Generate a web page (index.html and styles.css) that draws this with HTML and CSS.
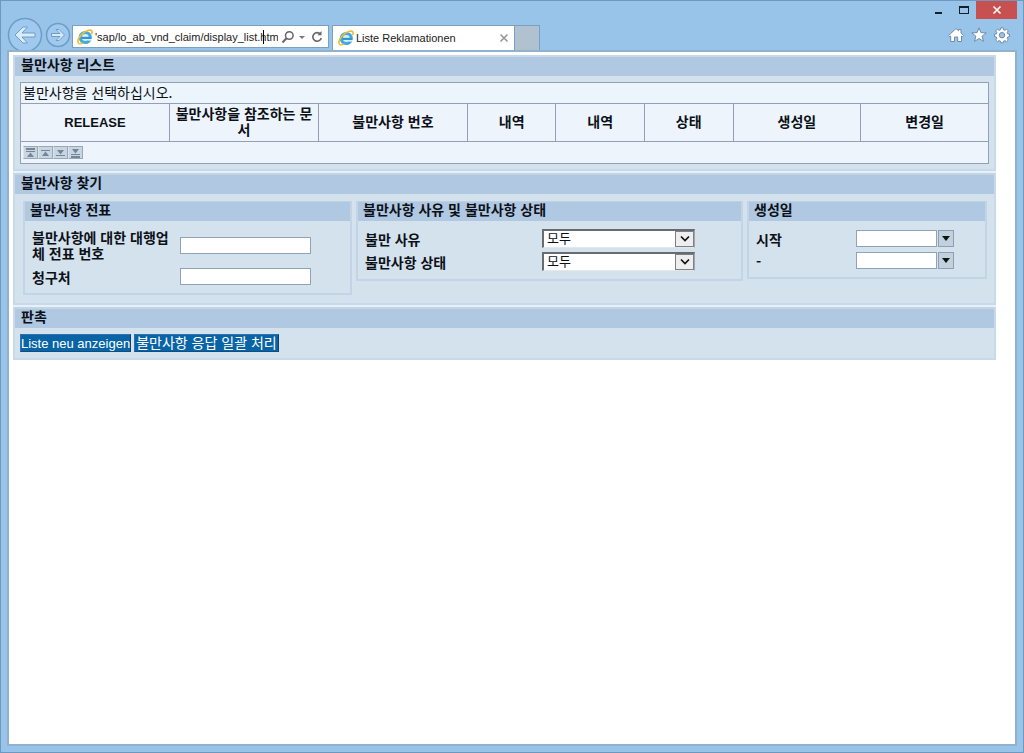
FILE: index.html
```html
<!DOCTYPE html>
<html lang="ko">
<head>
<meta charset="utf-8">
<meta name="viewport" content="width=device-width, initial-scale=1">
<title>Liste Reklamationen</title>
<link rel="stylesheet" href="styles.css">
</head>
<body>
<svg class="defs" aria-hidden="true">
  <symbol id="ie" viewBox="0 0 16 16">
    <circle cx="8.3" cy="8.5" r="5" fill="#d5effb" stroke="#41a9e0" stroke-width="3.2"/>
    <path d="M4.5 8.9h9.3" stroke="#2f93d1" stroke-width="2.1"/>
    <path d="M10.5 10.2h4.6v1.3h-4.600z" fill="#fff"/>
    <path d="M1.9 14.6C-.7 12.6 2.2 7 6.500 3.800 10 1.100 14 .3 14.900 2.100c.5 1 .1 2.200-.4 3.100" fill="none" stroke="#f0bd2c" stroke-width="1.6"/>
    <path d="M1.900 14.600c1.200.7 3 .1 4.500-.8" fill="none" stroke="#f0bd2c" stroke-width="1.300"/>
  </symbol>
</svg>
<div class="window">
  <header class="chrome">
    <div class="nav">
      <button class="round back" aria-label="Back"><svg viewBox="0 0 36 36"><circle cx="18" cy="18" r="16.500"/><path d="M8 18l8-8h4.500l-5.500 6h13v4H15l5.500 6H16z"/></svg></button>
      <button class="round forward" aria-label="Forward"><svg viewBox="0 0 26 26"><circle cx="13" cy="13" r="11.500"/><path d="M19.500 13l-5.500 5.500h-3l4-4H6.500v-3H15l-4-4h3z"/></svg></button>
    </div>
    <div class="address">
      <svg class="ie" aria-hidden="true"><use href="#ie"/></svg>
      <div class="url-box"><input class="url" type="text" aria-label="Address" value="'sap/lo_ab_vnd_claim/display_list.htm"><span class="caret"></span></div>
      <button class="tool search" aria-label="Search"><svg viewBox="0 0 14 14"><circle cx="8.300" cy="5.500" r="3.800" fill="none" stroke="#666" stroke-width="1.500"/><path d="M5.500 8.300L1.500 12.500" stroke="#666" stroke-width="2"/></svg></button>
      <button class="tool drop" aria-label="Show address list"><svg viewBox="0 0 8 14"><path d="M1 6h6L4 9z" fill="#777"/></svg></button>
      <button class="tool" aria-label="Refresh"><svg viewBox="0 0 14 14"><path d="M10.500 4.200A4.300 4.300 0 1 0 11.300 8" fill="none" stroke="#666" stroke-width="1.600"/><path d="M7.300 5.300h4.200V1z" fill="#666"/></svg></button>
    </div>
    <div class="tab"><svg class="ie" aria-hidden="true"><use href="#ie"/></svg><span class="tab-title">Liste Reklamationen</span><button class="tool tab-close" aria-label="Close tab"><svg viewBox="0 0 10 10"><path d="M1.500 1.500l7 7m0-7l-7 7" stroke="#999" stroke-width="1.700"/></svg></button></div>
    <button class="new-tab" aria-label="New tab"></button>
    <div class="right">
      <div class="window-buttons">
        <button class="wb" aria-label="Minimize"><svg viewBox="0 0 10 10"><path d="M1 8h7" stroke="#151f29" stroke-width="2"/></svg></button>
        <button class="wb" aria-label="Maximize"><svg viewBox="0 0 10 10"><path d="M0 1h10v8H0zM1 3v5h8V3z" fill="#151f29" fill-rule="evenodd"/></svg></button>
        <button class="wb close" aria-label="Close"><svg viewBox="0 0 10 10"><path d="M1.500 1.500l7 7m0-7l-7 7" stroke="#fff" stroke-width="1.600"/></svg></button>
      </div>
      <div class="page-tools">
        <button aria-label="Home"><svg viewBox="0 0 16 16"><path d="M8 1.500l2.500 2.300V2.500H13V6l2.500 2.500-1.200 1.200-.8-.7v5.500H9.700V10H6.500v4.500H2.700V9l-.8.7L.7 8.500z"/></svg></button>
        <button aria-label="Favorites"><svg viewBox="0 0 16 16"><path d="M8 .8l1.900 4.800 5.300.3-4.100 3.300 1.400 5.200L8 11.500l-4.500 2.900 1.400-5.200L.8 5.900l5.300-.3z"/></svg></button>
        <button aria-label="Tools"><svg viewBox="0 0 16 16"><path fill-rule="evenodd" d="M6.800.8h2.400l.4 2 1.300.5 1.700-1.100 1.700 1.700-1.100 1.700.5 1.300 1.800.3v2.400l-1.800.4-.5 1.300 1.100 1.700-1.700 1.700-1.700-1.100-1.300.5-.4 1.700H6.800l-.4-1.700-1.300-.5-1.700 1.100-1.700-1.700 1.100-1.700-.5-1.300-1.800-.4V7.200l1.800-.3.5-1.300-1.100-1.700 1.700-1.700 1.700 1.100 1.300-.5zM8 5.500a2.700 2.700 0 1 0 0 5.400 2.700 2.700 0 0 0 0-5.400z"/></svg></button>
      </div>
    </div>
  </header>
  <main class="page">
    <section class="panel">
      <h2 class="title">불만사항 리스트</h2>
      <div class="list-body">
        <table class="claims">
          <colgroup><col class="wide"><col class="wide"><col class="wide"><col class="narrow"><col class="narrow"><col class="narrow"><col class="date"><col class="date"></colgroup>
          <tbody>
            <tr><td class="message" colspan="8">불만사항을 선택하십시오.</td></tr>
            <tr><th class="latin" scope="col">RELEASE</th><th scope="col">불만사항을 참조하는 문서</th><th scope="col">불만사항 번호</th><th scope="col">내역</th><th scope="col">내역</th><th scope="col">상태</th><th scope="col">생성일</th><th scope="col">변경일</th></tr>
            <tr><td class="pager-cell" colspan="8"><div class="pager">
              <button aria-label="First page"><svg viewBox="0 0 11 10"><path d="M1 0h9v2H1zM1 3h9v1H1zM5.500 4.500L9 9H2z"/></svg></button>
              <button aria-label="Previous page"><svg viewBox="0 0 11 10"><path d="M1 2h9v1H1zM5.500 3.500L9 8H2z"/></svg></button>
              <button aria-label="Next page"><svg viewBox="0 0 11 10"><path d="M1 7h9v1H1zM2 2h7L5.500 6.500z"/></svg></button>
              <button aria-label="Last page"><svg viewBox="0 0 11 10"><path d="M1 8h9v2H1zM1 6h9v1H1zM2 1h7L5.500 5.500z"/></svg></button>
            </div></td></tr>
          </tbody>
        </table>
      </div>
    </section>
    <section class="panel">
      <h2 class="title">불만사항 찾기</h2>
      <div class="groups">
        <fieldset class="group document">
          <h3 class="title">불만사항 전표</h3>
          <div class="fields">
            <label for="docno">불만사항에 대한 대행업체 전표 번호</label><input class="field" id="docno" type="text">
            <label for="payer">청구처</label><input class="field" id="payer" type="text">
          </div>
        </fieldset>
        <fieldset class="group reason">
          <h3 class="title">불만사항 사유 및 불만사항 상태</h3>
          <div class="fields">
            <label for="reason">불만 사유</label>
            <div class="select"><select id="reason"><option>모두</option></select><span class="arrow"><svg viewBox="0 0 10 8"><path d="M1 1.500l4 4 4-4"/></svg></span></div>
            <label for="status">불만사항 상태</label>
            <div class="select"><select id="status"><option>모두</option></select><span class="arrow"><svg viewBox="0 0 10 8"><path d="M1 1.500l4 4 4-4"/></svg></span></div>
          </div>
        </fieldset>
        <fieldset class="group created">
          <h3 class="title">생성일</h3>
          <div class="fields">
            <label for="from">시작</label>
            <div class="date-box"><input class="field" id="from" type="text"><button aria-label="Choose start date"><svg viewBox="0 0 8 5"><path d="M0 0h8L4 5z"/></svg></button></div>
            <label for="to">-</label>
            <div class="date-box"><input class="field" id="to" type="text"><button aria-label="Choose end date"><svg viewBox="0 0 8 5"><path d="M0 0h8L4 5z"/></svg></button></div>
          </div>
        </fieldset>
      </div>
    </section>
    <section class="panel">
      <h2 class="title">판촉</h2>
      <div class="actions"><button class="action latin">Liste neu anzeigen</button><button class="action">불만사항 응답 일괄 처리</button></div>
    </section>
  </main>
</div>
</body>
</html>
```
FILE: styles.css
```css
* { box-sizing: border-box; }
body {
  margin: 0;
  font: 14px/16px "Noto Sans CJK KR", "Liberation Sans", sans-serif;
  color: #0c1118;
}
button, input, select { font: inherit; color: inherit; margin: 0; border-radius: 0; }
button { padding: 0; border: 0; background: none; display: flex; align-items: center; justify-content: center; }
svg { display: block; }
.defs { position: absolute; width: 0; height: 0; }
.latin { font-family: "Liberation Sans", Arial, sans-serif; font-size: 13px; }

.window {
  display: flex;
  flex-direction: column;
  min-height: 100vh;
  padding: 0 6px 6px;
  border: 1px solid #6f98c0;
  background: #99c4ea;
}

/* browser chrome */
.chrome { display: flex; align-items: flex-end; height: 49px; flex: none; }
.nav { display: flex; align-items: center; width: 65px; height: 30px; gap: 2px; }
.round { flex: none; }
.round svg { width: 36px; height: 36px; fill: #d8ecfc; stroke: #6f9cc6; }
.round circle { fill: #9fc9ee; stroke-width: 1.5; }
.forward svg { width: 26px; height: 26px; }
.address {
  display: flex;
  align-items: center;
  width: 257px;
  height: 23px;
  margin-bottom: 2px;
  padding: 0 4px;
  border: 1px solid #7c9fc0;
  background: #fff;
}
.ie { width: 16px; height: 16px; flex: none; }
.url-box { position: relative; flex: 1; min-width: 0; margin-left: 2px; }
.url { display: block; width: 100%; height: 20px; padding: 0; border: 0; outline: 0; background: none; font: 11px/20px "Liberation Sans", Arial, sans-serif; color: #222; }
.caret { position: absolute; right: 14px; top: 3px; width: 1px; height: 14px; background: #000; }
.tool svg { width: 14px; height: 14px; }
.search { margin-left: 3px; }
.drop { margin: 0 4px 0 3px; }
.drop svg { width: 8px; }
.tab {
  display: flex;
  align-items: center;
  width: 183px;
  height: 25px;
  margin-left: 3px;
  padding: 0 5px;
  border: solid #7c9fc0;
  border-width: 1px 1px 0;
  background: #fff;
}
.tab-title { flex: 1; margin-left: 2px; font: 11px/20px "Liberation Sans", Arial, sans-serif; color: #222; white-space: nowrap; }
.tab-close svg { width: 10px; height: 10px; }
.new-tab { width: 25px; height: 25px; border: solid #7c9fc0; border-width: 1px 1px 0 0; background: #b0c2d0; }
.right { display: flex; flex-direction: column; justify-content: space-between; align-items: flex-end; align-self: stretch; margin-left: auto; }
.window-buttons { display: flex; }
.wb { width: 25px; height: 18px; }
.wb svg { width: 10px; height: 10px; }
.close { width: 41px; background: #c75050; }
.page-tools { display: flex; gap: 7px; padding: 0 7px 7px 0; }
.page-tools svg { width: 16px; height: 16px; fill: #fff; stroke: #6f8ba8; stroke-width: 1; overflow: visible; }

/* web page */
.page {
  flex: 1;
  padding: 3px 19px 3px 4px;
  border: 2px solid #92b1cb;
  background: #fff;
}
.panel { border: 2px solid #c8d9eb; background: #d4e2ed; }
.panel + .panel { border-top-color: #c3d4e3; box-shadow: 0 -2px #e4f1fa; margin-top: 2px; }
.title { margin: 0; padding: 0 6px; height: 19px; font-size: 14px; line-height: 15px; font-weight: 700; background: #b0c8e2; }
.list-body { padding: 6px 5px 5px; }
.claims { width: 100%; border-collapse: collapse; table-layout: fixed; background: #eef4fc; }
.claims td, .claims th { border: 1px solid #929fb4; }
.claims .message { height: 21px; padding: 0 2px 2px; background: #ecf5fb; }
.claims th { height: 38px; padding: 0 3px 3px; text-align: center; word-break: break-all; }
.claims .latin { padding: 0 3px; }
.claims .pager-cell { height: 22px; padding: 0 2px; }
.wide { width: 15.4%; }
.narrow { width: 9.15%; }
.date { width: 13.2%; }
.pager { display: flex; }
.pager button { width: 15px; height: 13px; border: 1px solid #98a8b9; border-left-color: #dbe5ed; background: #c9d5e0; }
.pager svg { width: 11px; height: 10px; fill: #75869a; }

.groups { display: grid; grid-template-columns: 329fr 387fr 240fr; gap: 4px; align-items: start; padding: 7px 7px 8px 8px; }
.group { min-width: 0; margin: 0; padding: 0; border: 2px solid #c3d4e6; border-top: 1px solid #bed0e4; }
.group .title { padding: 0 5px; }
.group .fields { display: grid; align-items: center; font-weight: 700; }
.fields label { word-break: break-all; }
.document .fields { grid-template-columns: 140px 131px; column-gap: 8px; row-gap: 7px; padding: 8px 7px; }
.reason .fields { grid-template-columns: 165px 153px; column-gap: 12px; row-gap: 4px; padding: 8px 7px; }
.created .fields { grid-template-columns: 88px 98px; column-gap: 12px; row-gap: 5px; padding: 9px 7px 8px; }
.field { width: 100%; height: 17px; padding: 0 2px; border: 1px solid #8ea3ba; background: #fff; font-weight: 400; }
.select { display: grid; grid-template-columns: 1fr 19px; height: 19px; border: 2px solid #686b70; border-right: 1px solid #a0a6ad; border-bottom: 1px solid #e4e7ea; background: #fff; }
.select select { grid-area: 1 / 1 / 2 / 3; min-width: 0; width: 100%; padding: 0 3px 2px; border: 0; background: none; appearance: none; font-size: 13px; line-height: 14px; font-weight: 400; }
.arrow { grid-area: 1 / 2; display: flex; align-items: center; justify-content: center; border: 1px solid #7d8084; background: #eee; pointer-events: none; }
.arrow svg { width: 10px; height: 8px; fill: none; stroke: #111; stroke-width: 1.7; }
.date-box { display: flex; gap: 1px; }
.date-box .field { flex: 1; min-width: 0; }
.date-box button { width: 16px; height: 17px; border: 1px solid #8c9fb3; background: #c3d1df; }
.date-box button svg { width: 8px; height: 5px; fill: #071810; }

.actions { display: flex; gap: 3px; padding: 6px 5px; }
.action { height: 18px; padding: 0 1px 1px; border: 1px solid #2a72ad; border-right-color: #0c3f6b; border-bottom-color: #0c4f86; background: #0864a5; color: #fff; line-height: 15px; white-space: nowrap; }
.action.latin { padding: 0; }
```
